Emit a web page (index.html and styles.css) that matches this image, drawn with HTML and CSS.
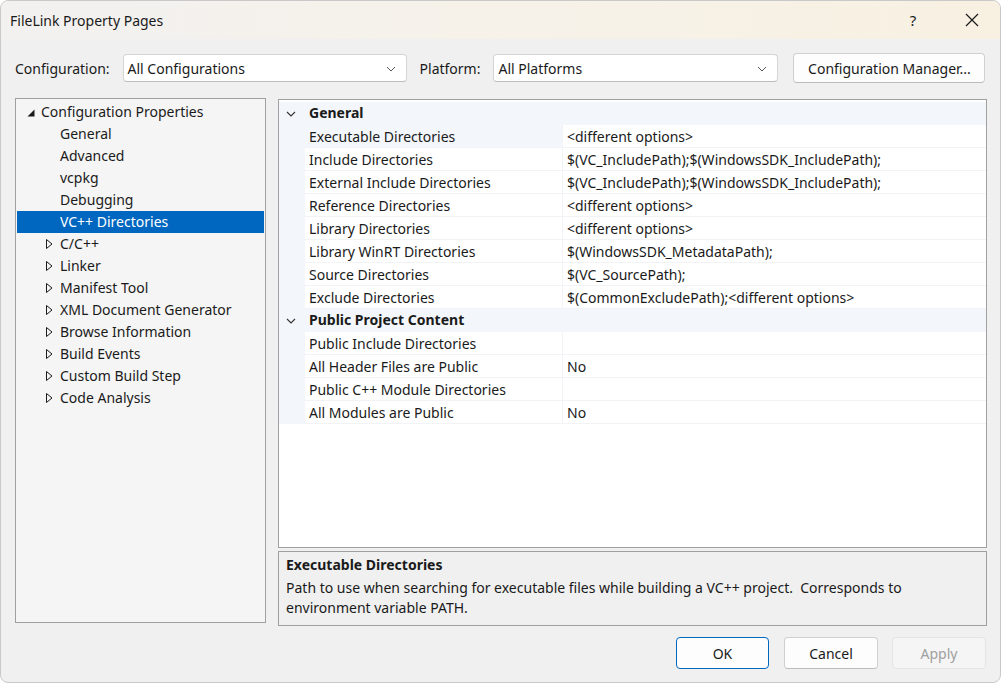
FILE: index.html
```html
<!DOCTYPE html>
<html lang="en">
<head>
<meta charset="utf-8">
<title>FileLink Property Pages</title>
<link rel="stylesheet" href="styles.css">
</head>
<body>
<div class="window">
  <div class="titlebar">
    <span class="title">FileLink Property Pages</span>
    <div class="caption">
      <span class="cap-btn help">?</span>
      <span class="cap-btn close">
        <svg width="14" height="14" viewBox="0 0 14 14"><path d="M1 1 L13 13 M13 1 L1 13" stroke="#1a1a1a" stroke-width="1.2" fill="none"/></svg>
      </span>
    </div>
  </div>

  <div class="content">
    <div class="toolbar">
      <span class="label">Configuration:</span>
      <div class="combo combo-config"><span>All Configurations</span><svg class="chev" width="10" height="6" viewBox="0 0 10 6"><path d="M1 1 L5 5 L9 1" stroke="#555" stroke-width="1" fill="none"/></svg></div>
      <span class="label label-platform">Platform:</span>
      <div class="combo combo-platform"><span>All Platforms</span><svg class="chev" width="10" height="6" viewBox="0 0 10 6"><path d="M1 1 L5 5 L9 1" stroke="#555" stroke-width="1" fill="none"/></svg></div>
      <button class="btn btn-manager">Configuration Manager...</button>
    </div>

    <div class="main">
      <div class="tree">
        <div class="node root"><svg class="exp exp-down" width="8" height="8" viewBox="0 0 8 8"><polygon points="7.5,0.5 7.5,7.5 0.5,7.5" fill="#1a1a1a"/></svg>Configuration Properties</div>
        <div class="node leaf">General</div>
        <div class="node leaf">Advanced</div>
        <div class="node leaf">vcpkg</div>
        <div class="node leaf">Debugging</div>
        <div class="node leaf selected">VC++ Directories</div>
        <div class="node branch"><svg class="exp exp-right" width="7" height="10" viewBox="0 0 7 10"><polygon points="0.5,0.5 6,5 0.5,9.5" fill="none" stroke="#1a1a1a" stroke-width="1"/></svg>C/C++</div>
        <div class="node branch"><svg class="exp exp-right" width="7" height="10" viewBox="0 0 7 10"><polygon points="0.5,0.5 6,5 0.5,9.5" fill="none" stroke="#1a1a1a" stroke-width="1"/></svg>Linker</div>
        <div class="node branch"><svg class="exp exp-right" width="7" height="10" viewBox="0 0 7 10"><polygon points="0.5,0.5 6,5 0.5,9.5" fill="none" stroke="#1a1a1a" stroke-width="1"/></svg>Manifest Tool</div>
        <div class="node branch"><svg class="exp exp-right" width="7" height="10" viewBox="0 0 7 10"><polygon points="0.5,0.5 6,5 0.5,9.5" fill="none" stroke="#1a1a1a" stroke-width="1"/></svg>XML Document Generator</div>
        <div class="node branch"><svg class="exp exp-right" width="7" height="10" viewBox="0 0 7 10"><polygon points="0.5,0.5 6,5 0.5,9.5" fill="none" stroke="#1a1a1a" stroke-width="1"/></svg>Browse Information</div>
        <div class="node branch"><svg class="exp exp-right" width="7" height="10" viewBox="0 0 7 10"><polygon points="0.5,0.5 6,5 0.5,9.5" fill="none" stroke="#1a1a1a" stroke-width="1"/></svg>Build Events</div>
        <div class="node branch"><svg class="exp exp-right" width="7" height="10" viewBox="0 0 7 10"><polygon points="0.5,0.5 6,5 0.5,9.5" fill="none" stroke="#1a1a1a" stroke-width="1"/></svg>Custom Build Step</div>
        <div class="node branch"><svg class="exp exp-right" width="7" height="10" viewBox="0 0 7 10"><polygon points="0.5,0.5 6,5 0.5,9.5" fill="none" stroke="#1a1a1a" stroke-width="1"/></svg>Code Analysis</div>
      </div>

      <div class="right">
        <div class="grid">
          <div class="category">
            <span class="gutter"><svg width="10" height="6" viewBox="0 0 10 6"><path d="M1 1 L5 5 L9 1" stroke="#333" stroke-width="1.1" fill="none"/></svg></span>
            <span class="cat-name">General</span>
          </div>
          <div class="row current"><span class="gutter"></span><span class="name">Executable Directories</span><span class="value">&lt;different options&gt;</span></div>
          <div class="row"><span class="gutter"></span><span class="name">Include Directories</span><span class="value">$(VC_IncludePath);$(WindowsSDK_IncludePath);</span></div>
          <div class="row"><span class="gutter"></span><span class="name">External Include Directories</span><span class="value">$(VC_IncludePath);$(WindowsSDK_IncludePath);</span></div>
          <div class="row"><span class="gutter"></span><span class="name">Reference Directories</span><span class="value">&lt;different options&gt;</span></div>
          <div class="row"><span class="gutter"></span><span class="name">Library Directories</span><span class="value">&lt;different options&gt;</span></div>
          <div class="row"><span class="gutter"></span><span class="name">Library WinRT Directories</span><span class="value">$(WindowsSDK_MetadataPath);</span></div>
          <div class="row"><span class="gutter"></span><span class="name">Source Directories</span><span class="value">$(VC_SourcePath);</span></div>
          <div class="row"><span class="gutter"></span><span class="name">Exclude Directories</span><span class="value">$(CommonExcludePath);&lt;different options&gt;</span></div>
          <div class="category">
            <span class="gutter"><svg width="10" height="6" viewBox="0 0 10 6"><path d="M1 1 L5 5 L9 1" stroke="#333" stroke-width="1.1" fill="none"/></svg></span>
            <span class="cat-name">Public Project Content</span>
          </div>
          <div class="row"><span class="gutter"></span><span class="name">Public Include Directories</span><span class="value"></span></div>
          <div class="row"><span class="gutter"></span><span class="name">All Header Files are Public</span><span class="value">No</span></div>
          <div class="row"><span class="gutter"></span><span class="name">Public C++ Module Directories</span><span class="value"></span></div>
          <div class="row"><span class="gutter"></span><span class="name">All Modules are Public</span><span class="value">No</span></div>
        </div>
        <div class="desc">
          <div class="desc-title">Executable Directories</div>
          <div class="desc-text">Path to use when searching for executable files while building a VC++ project.&nbsp; Corresponds to environment variable PATH.</div>
        </div>
      </div>
    </div>

    <div class="footer">
      <button class="btn btn-ok">OK</button>
      <button class="btn btn-cancel">Cancel</button>
      <button class="btn btn-disabled">Apply</button>
    </div>
  </div>
</div>
</body>
</html>
```

FILE: styles.css
```css
html, body {
  margin: 0;
  padding: 0;
  background: #ffffff;
}

body {
  font-family: "Segoe UI", "Noto Sans", "Open Sans", sans-serif;
  font-size: 14px;
  color: #1a1a1a;
}

.window {
  width: 1001px;
  height: 683px;
  box-sizing: border-box;
  border: 1px solid #c9c9c9;
  border-radius: 8px;
  background: #f0f0f0;
  overflow: hidden;
  display: flex;
  flex-direction: column;
}

/* caption bar with its warm mica tint */
.titlebar {
  height: 38px;
  flex: none;
  display: flex;
  align-items: center;
  justify-content: space-between;
  padding-left: 9px;
  background: linear-gradient(90deg, #f2f1f0 0%, #f6f2ea 45%, #f8f1e2 100%);
}

.title {
  font-size: 14px;
  color: #1a1a1a;
}

.caption {
  display: flex;
  height: 100%;
}

.cap-btn {
  width: 58px;
  height: 100%;
  display: flex;
  align-items: center;
  justify-content: center;
  box-sizing: border-box;
}

.help {
  font-size: 15px;
  padding-right: 2px;
}

.close {
  width: 57px;
}

.content {
  flex: 1;
  display: flex;
  flex-direction: column;
  padding: 0 14px;
}

/* configuration / platform selectors */
.toolbar {
  display: flex;
  align-items: center;
  height: 30px;
  margin-top: 14px;
}

.label {
  margin-right: 13px;
}

.label-platform {
  margin-left: 13px;
  margin-right: 13px;
}

.combo {
  height: 28px;
  box-sizing: border-box;
  background: #ffffff;
  border: 1px solid #d4d4d4;
  border-bottom-color: #bdbdbd;
  border-radius: 4px;
  display: flex;
  align-items: center;
  justify-content: space-between;
  padding: 0 10px 0 4px;
}

.combo-config {
  width: 284px;
}

.combo-platform {
  width: 285px;
}

.chev {
  margin-top: 1px;
}

.btn {
  font-family: inherit;
  font-size: 14px;
  color: #1a1a1a;
  height: 32px;
  box-sizing: border-box;
  background: #fdfdfd;
  border: 1px solid #d0d0d0;
  border-bottom-color: #bcbcbc;
  border-radius: 4px;
  padding: 0;
}

.btn-manager {
  margin-left: 15px;
  width: 192px;
  height: 30px;
}

/* tree + property grid */
.main {
  display: flex;
  gap: 12px;
  margin-top: 15px;
}

.tree {
  width: 251px;
  height: 525px;
  box-sizing: border-box;
  border: 1px solid #a0a0a0;
  background: #f5f5f5;
  padding: 2px 1px 1px 1px;
  flex: none;
}

.node {
  height: 22px;
  line-height: 22px;
  position: relative;
  white-space: nowrap;
}

.root {
  padding-left: 24px;
}

.leaf, .branch {
  padding-left: 43px;
}

.node.selected {
  background: #0067c0;
  color: #ffffff;
}

.exp {
  position: absolute;
}

/* expanded marker: small filled corner triangle */
.exp-down {
  left: 10px;
  top: 8px;
}

/* collapsed marker: hollow right-pointing triangle */
.exp-right {
  left: 29px;
  top: 6px;
}

.right {
  width: 709px;
  display: flex;
  flex-direction: column;
  gap: 3px;
  flex: none;
  padding-top: 1px;
}

.grid {
  height: 449px;
  box-sizing: border-box;
  border: 1px solid #a0a0a0;
  background: #ffffff;
  padding-top: 2px;
}

.category, .row {
  display: flex;
  height: 23px;
  box-sizing: border-box;
  line-height: 22px;
  white-space: nowrap;
}

.category {
  background: #f3f6fa;
}

.gutter {
  width: 26px;
  flex: none;
  background: #f3f6fa;
  display: flex;
  align-items: center;
  justify-content: center;
  padding-right: 2px;
  box-sizing: border-box;
}

.cat-name {
  font-weight: bold;
  padding-left: 4px;
}

.row .name,
.row .value {
  box-sizing: border-box;
  padding-top: 1px;
  line-height: 21px;
  border-bottom: 1px solid #f1f3f7;
}

.row .name {
  width: 258px;
  flex: none;
  padding-left: 4px;
  border-right: 1px solid #f1f3f7;
}

.row .value {
  flex: 1;
  padding-left: 4px;
}

.row.current .name {
  background: #f3f6fa;
}

/* description pane */
.desc {
  height: 75px;
  box-sizing: border-box;
  border: 1px solid #a0a0a0;
  padding: 2px 7px 0 7px;
}

.desc-title {
  font-weight: bold;
  line-height: 22px;
}

.desc-text {
  width: 640px;
  line-height: 20px;
  margin-top: 2px;
}

/* dialog buttons */
.footer {
  display: flex;
  justify-content: flex-end;
  margin-top: 11px;
}

.btn-ok {
  width: 93px;
  border: 1px solid #0067c0;
}

.btn-cancel {
  width: 94px;
  margin-left: 15px;
}

.btn-disabled {
  width: 94px;
  margin-left: 14px;
  background: #f5f5f5;
  border-color: #e5e5e5;
  color: #a0a0a0;
}
```
